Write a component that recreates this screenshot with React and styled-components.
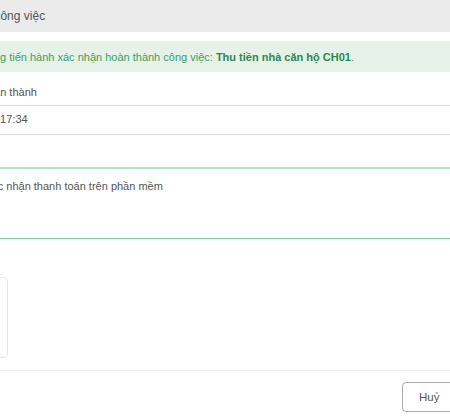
import styled, { createGlobalStyle } from "styled-components";

const GlobalStyle = createGlobalStyle`
html, body {
    margin: 0;
    padding: 0;
    background: #fff;
}
body {
    font-family: "Liberation Sans", Arial, sans-serif;
    overflow: hidden;
}
`;

const Page = styled.div`
width: 450px;
height: 420px;
overflow: hidden;
`;

const Modal = styled.div`
width: 480px;
display: flex;
flex-direction: column;
`;

const Header = styled.div`
height: 32px;
background: #ebebeb;
display: flex;
align-items: center;
font-size: 12px;
color: #555;
white-space: nowrap;
`;

const Body = styled.div`
display: flex;
flex-direction: column;
padding-top: 9px;
`;

const Alert = styled.div`
height: 31px;
background: #e6f1ea;
color: #3d9f60;
font-size: 11px;
display: flex;
align-items: center;
white-space: nowrap;
& b {
    color: #2b8a4c;
}
`;

const Cut = styled.span`
display: inline-block;
margin-left: ${(props) => -props.$cut}px;
white-space: nowrap;
`;

const Row = styled.div`
box-sizing: border-box;
height: ${(props) => props.$h}px;
padding-top: ${(props) => props.$top}px;
line-height: 13px;
font-size: 11px;
color: #555;
border-bottom: 1px solid ${(props) => (props.$noLine ? "transparent" : "#dcdce2")};
`;

const TextArea = styled.div`
box-sizing: border-box;
height: 72px;
padding-top: 11px;
line-height: 13px;
font-size: 11px;
color: #555;
border-top: 2px solid #a9e5c3;
border-bottom: 1px solid #6dd39b;
`;

const Thumb = styled.div`
width: 80px;
height: 81px;
margin: 38px 0 0 -72px;
box-sizing: border-box;
border: 1px solid #e4e4e4;
border-radius: 5px;
`;

const Divider = styled.div`
height: 1px;
margin-top: 12px;
background: #f1f1f1;
`;

const Footer = styled.div`
display: flex;
justify-content: flex-end;
padding: 11px 14px 0 0;
`;

const Button = styled.div`
box-sizing: border-box;
width: 64px;
height: 30px;
border: 1px solid #acacac;
border-radius: 4px;
padding-left: 16px;
display: flex;
align-items: center;
font-size: 11.5px;
color: #555;
cursor: pointer;
`;

const App = () => {
    return (
        <Page>
            <GlobalStyle />
            <Modal>
                <Header>
                    <Cut $cut={123}>Xác nhận hoàn thành công việc</Cut>
                </Header>
                <Body>
                    <Alert>
                        <Cut $cut={41}>
                            Bạn đang tiến hành xác nhận hoàn thành công việc: <b>Thu tiền nhà căn hộ CH01</b>.
                        </Cut>
                    </Alert>
                    <Row $h={34} $top={14}>
                        <Cut $cut={20}>Hoàn thành</Cut>
                    </Row>
                    <Row $h={29} $top={7}>
                        <Cut $cut={58}>20/10/2023 17:34</Cut>
                    </Row>
                    <Row $h={32} $top={0} $noLine />
                    <TextArea>
                        <Cut $cut={31}>Đã xác nhận thanh toán trên phần mềm</Cut>
                    </TextArea>
                    <Thumb />
                    <Divider />
                    <Footer>
                        <Button>Huỷ</Button>
                    </Footer>
                </Body>
            </Modal>
        </Page>
    );
};

export default App;
